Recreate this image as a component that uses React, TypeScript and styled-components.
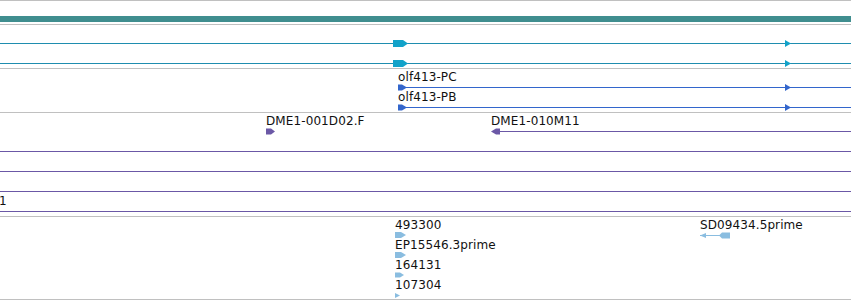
import React from 'react';
import styled, { createGlobalStyle } from 'styled-components';

const GlobalStyle = createGlobalStyle`
  html, body {
    margin: 0;
    padding: 0;
    background: #fff;
  }
  body {
    font-family: 'DejaVu Sans', 'Liberation Sans', sans-serif;
  }
`;

const Panel = styled.div`
  width: 851px;
  height: 301px;
  overflow: hidden;
  border-top: 1px solid #c0c0c0;
  box-sizing: border-box;
`;

const ScaleTrack = styled.div`
  height: 24px;
  padding-top: 15px;
  box-sizing: border-box;
  border-bottom: 1px solid #c0c0c0;
`;

const ScaleBar = styled.div`
  height: 6px;
  background: #408e8f;
`;

const Track = styled.div<{ $pt: number; $pb: number }>`
  padding: ${(p) => p.$pt}px 0 ${(p) => p.$pb}px;
  border-bottom: 1px solid #c0c0c0;
  display: flex;
  flex-direction: column;
`;

const Lane = styled.div`
  position: relative;
  height: 20px;
`;

const Label = styled.span<{ $x: number }>`
  position: absolute;
  top: 1px;
  left: ${(p) => p.$x}px;
  font-size: 12px;
  line-height: 13px;
  letter-spacing: 0.1px;
  color: #111;
  white-space: nowrap;
`;

const GlyphLayer = styled.svg`
  position: absolute;
  top: 13px;
  left: 0;
  width: 851px;
  height: 8px;
  overflow: visible;
`;

type LaneData = {
  label?: { x: number; text: string }[];
  lines?: [number, number][];
  shapes?: string[];
};

type TrackData = {
  line: string;
  glyph: string;
  pt: number;
  pb: number;
  lanes: LaneData[];
};

const tick = 'M785,1L791,4.5L785,8Z';

const tracks: TrackData[] = [
  {
    line: '#1f8daf',
    glyph: '#12a2c9',
    pt: 1,
    pb: 2,
    lanes: [
      { lines: [[0, 851]], shapes: ['M393,1H403L408,4.5L403,8H393Z', tick] },
      { lines: [[0, 851]], shapes: ['M393,1H403L408,4.5L403,8H393Z', tick] },
    ],
  },
  {
    line: '#3366cc',
    glyph: '#3366cc',
    pt: 1,
    pb: 2,
    lanes: [
      {
        label: [{ x: 398, text: 'olf413-PC' }],
        lines: [[398, 851]],
        shapes: ['M398,1.5H402L407,4.5L402,7.5H398Z', tick],
      },
      {
        label: [{ x: 398, text: 'olf413-PB' }],
        lines: [[398, 851]],
        shapes: ['M398,1.5H402L407,4.5L402,7.5H398Z', tick],
      },
    ],
  },
  {
    line: '#6b58a6',
    glyph: '#6b58a6',
    pt: 1,
    pb: 2,
    lanes: [
      {
        label: [
          { x: 266, text: 'DME1-001D02.F' },
          { x: 491, text: 'DME1-010M11' },
        ],
        lines: [[496, 851]],
        shapes: ['M266,1.5H271L275,4.5L271,7.5H266Z', 'M491,4.5L496,1.5H500V7.5H496Z'],
      },
      { lines: [[0, 851]] },
      { lines: [[0, 851]] },
      { lines: [[0, 851]] },
      { label: [{ x: -1, text: '1' }], lines: [[0, 851]] },
    ],
  },
  {
    line: '#8abde0',
    glyph: '#8abde0',
    pt: 1,
    pb: 1,
    lanes: [
      {
        label: [
          { x: 395, text: '493300' },
          { x: 700, text: 'SD09434.5prime' },
        ],
        lines: [[700, 722]],
        shapes: [
          'M395,1H401L406,4L401,7H395Z',
          'M700,4.5L706,2V7Z',
          'M719,4.5L722,1.5H730V7.5H722Z',
        ],
      },
      {
        label: [{ x: 395, text: 'EP15546.3prime' }],
        shapes: ['M395,1H401L406,4L401,7H395Z'],
      },
      {
        label: [{ x: 395, text: '164131' }],
        shapes: ['M395,1.5H400L404,4L400,6.5H395Z'],
      },
      {
        label: [{ x: 395, text: '107304' }],
        shapes: ['M395,2L400,4.5L395,7Z'],
      },
    ],
  },
];

function TrackLane({ lane, line, glyph }: { lane: LaneData; line: string; glyph: string }) {
  return (
    <Lane>
      {lane.label?.map((l) => (
        <Label key={l.text} $x={l.x}>
          {l.text}
        </Label>
      ))}
      <GlyphLayer viewBox='0 0 851 8'>
        {lane.lines?.map(([x1, x2]) => (
          <rect key={x1} x={x1} y={4} width={x2 - x1} height={1} fill={line} shapeRendering='crispEdges' />
        ))}
        {lane.shapes?.map((d) => (
          <path key={d} d={d} fill={glyph} />
        ))}
      </GlyphLayer>
    </Lane>
  );
}

export default function App() {
  return (
    <>
      <GlobalStyle />
      <Panel>
        <ScaleTrack>
          <ScaleBar />
        </ScaleTrack>
        {tracks.map((t, i) => (
          <Track key={i} $pt={t.pt} $pb={t.pb}>
            {t.lanes.map((lane, j) => (
              <TrackLane key={j} lane={lane} line={t.line} glyph={t.glyph} />
            ))}
          </Track>
        ))}
      </Panel>
    </>
  );
}
